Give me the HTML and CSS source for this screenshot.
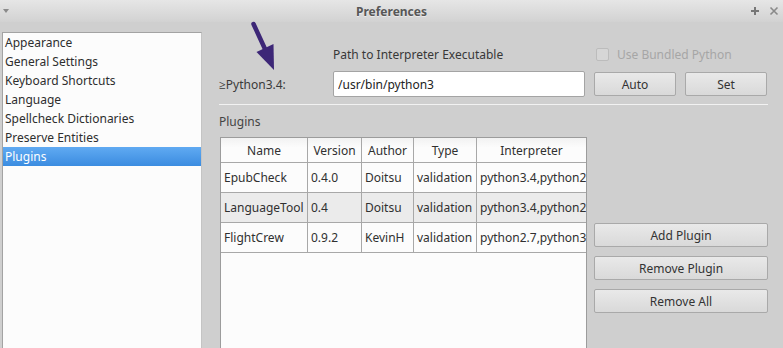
FILE: index.html
```html
<!DOCTYPE html>
<html lang="en">
<head>
  <meta charset="UTF-8">
  <title>Preferences</title>
  <link rel="stylesheet" href="styles.css">
</head>
<body>
  <div class="titlebar">
    <span class="menu-caret"></span>
    <span class="title">Preferences</span>
    <span class="title-buttons">
      <svg width="10" height="10" viewBox="0 0 10 10"><path d="M5 1v8M1 5h8" stroke="#777" stroke-width="2"/></svg>
      <svg width="10" height="10" viewBox="0 0 10 10"><path d="M1.5 1.5l7 7M8.5 1.5l-7 7" stroke="#8a8a8a" stroke-width="1.6"/></svg>
    </span>
  </div>

  <div class="window">
    <!-- Page list -->
    <ul class="pages">
      <li>Appearance</li>
      <li>General Settings</li>
      <li>Keyboard Shortcuts</li>
      <li>Language</li>
      <li>Spellcheck Dictionaries</li>
      <li>Preserve Entities</li>
      <li class="active">Plugins</li>
    </ul>

    <!-- Plugins page -->
    <div class="pane">
      <div class="interp">
        <span></span>
        <span class="path-label">Path to Interpreter Executable</span>
        <label class="bundled"><span class="check"></span>Use Bundled Python</label>

        <span class="py-label">&ge;Python3.4:</span>
        <input type="text" class="path-input" value="/usr/bin/python3">
        <button class="btn">Auto</button>
        <button class="btn">Set</button>
      </div>

      <div class="sep"></div>

      <div class="section-label">Plugins</div>

      <div class="plugins">
        <div class="table-box">
          <table>
            <thead>
              <tr>
                <th class="c-name">Name</th>
                <th class="c-ver">Version</th>
                <th class="c-author">Author</th>
                <th class="c-type">Type</th>
                <th class="c-interp">Interpreter</th>
              </tr>
            </thead>
            <tbody>
              <tr>
                <td>EpubCheck</td>
                <td>0.4.0</td>
                <td>Doitsu</td>
                <td>validation</td>
                <td>python3.4,python2</td>
              </tr>
              <tr class="alt">
                <td>LanguageTool</td>
                <td>0.4</td>
                <td>Doitsu</td>
                <td>validation</td>
                <td>python3.4,python2</td>
              </tr>
              <tr>
                <td>FlightCrew</td>
                <td>0.9.2</td>
                <td>KevinH</td>
                <td>validation</td>
                <td>python2.7,python3</td>
              </tr>
            </tbody>
          </table>
        </div>

        <div class="side-buttons">
          <button class="btn">Add Plugin</button>
          <button class="btn">Remove Plugin</button>
          <button class="btn">Remove All</button>
        </div>
      </div>
    </div>

    <!-- annotation arrow -->
    <svg class="arrow" width="783" height="348" viewBox="0 0 783 348">
      <path d="M253.5 24 L265 49" stroke="#3d2777" stroke-width="4.5" stroke-linecap="round"/>
      <polygon points="256.5,52 273.5,44 274,70" fill="#3d2777"/>
    </svg>
  </div>
</body>
</html>
```

FILE: styles.css
```css
* {
  box-sizing: border-box;
}

body {
  margin: 0;
  width: 783px;
  height: 348px;
  overflow: hidden;
  font-family: "Noto Sans", "Open Sans", sans-serif;
  font-size: 12px;
  color: #333;
  background: #cfcfcf;
  position: relative;
}

/* Title bar */
.titlebar {
  height: 22px;
  display: flex;
  align-items: center;
  justify-content: center;
  position: relative;
  background: linear-gradient(#e6e6e6, #d2d2d2);
}

.title {
  font-weight: bold;
  color: #575757;
  text-shadow: 0 1px 0 rgba(255, 255, 255, 0.5);
}

.menu-caret {
  position: absolute;
  left: 3px;
  top: 9px;
  border-left: 3.5px solid transparent;
  border-right: 3.5px solid transparent;
  border-top: 4px solid #8a8a8a;
}

.title-buttons {
  position: absolute;
  right: 4px;
  top: 6px;
  display: flex;
  gap: 9px;
}

/* Main window */
.window {
  display: flex;
  height: 326px;
  overflow: hidden;
}

.pages {
  list-style: none;
  margin: 10px 0 0 2px;
  padding: 0;
  width: 200px;
  height: 316px;
  background: #fcfcfc;
  border: 1px solid #a3a3a3;
  border-right-color: #c4c4c4;
  border-bottom: none;
}

.pages li {
  height: 19px;
  line-height: 19px;
  padding-left: 2px;
  color: #2e2e2e;
  white-space: nowrap;
}

.pages li.active {
  background: linear-gradient(#60aaf2, #3b8ce0);
  color: #fff;
}

.pane {
  padding: 0 15px 0 17px;
  width: 581px;
}

.interp {
  display: grid;
  grid-template-columns: 105px 252px 82px 82px;
  grid-template-rows: 20px 26px;
  column-gap: 9px;
  row-gap: 7px;
  margin-top: 22px;
  align-items: center;
}

.path-label {
  color: #383838;
}

.bundled {
  grid-column: 3 / 5;
  display: flex;
  align-items: center;
  color: #a6a6a6;
  padding-left: 2px;
  white-space: nowrap;
}

.check {
  width: 13px;
  height: 13px;
  border: 1px solid #bcbcbc;
  border-radius: 2px;
  background: #d6d6d6;
  margin-right: 8px;
}

.py-label {
  color: #3a3a3a;
}

.path-input {
  height: 26px;
  border: 1px solid #a4a4a4;
  border-radius: 2px;
  background: #fff;
  font: inherit;
  color: #222;
  padding: 0 4px;
}

.btn {
  height: 24px;
  border: 1px solid #a9a9a9;
  border-radius: 2px;
  background: linear-gradient(#e9e9e9, #d9d9d9);
  font: inherit;
  color: #333;
  padding: 0;
}

.sep {
  margin-top: 7px;
  height: 1px;
  background: #f2f2f2;
}

.section-label {
  height: 17px;
  line-height: 17px;
  margin: 8px 0 7px;
  color: #444;
}

/* Plugin table */
.plugins {
  display: flex;
}

.table-box {
  margin-left: 1px;
  width: 367px;
  height: 211px;
  flex-shrink: 0;
  background: #fcfcfc;
  border: 1px solid #9c9c9c;
  border-bottom: none;
}

table {
  border-collapse: separate;
  border-spacing: 0;
  table-layout: fixed;
  width: 365px;
}

th,
td {
  border-right: 1px solid #a8a8a8;
  border-bottom: 1px solid #a8a8a8;
  white-space: nowrap;
  overflow: hidden;
  padding: 0 0 0 3px;
  text-align: left;
  font-weight: normal;
  color: #303030;
}

th:last-child,
td:last-child {
  border-right: none;
}

th {
  height: 25px;
  text-align: center;
  padding: 0;
  background: linear-gradient(#f2f2f2, #fcfcfc 40%);
}

td {
  height: 30px;
}

.c-name { width: 87px; }
.c-ver { width: 54px; }
.c-author { width: 52px; }
.c-type { width: 63px; }
.c-interp { width: 109px; }

tr.alt td {
  background: #ebebeb;
}

.side-buttons {
  margin-left: 7px;
  padding-top: 86px;
  width: 174px;
  flex-shrink: 0;
  display: flex;
  flex-direction: column;
  gap: 9px;
}

/* annotation */
.arrow {
  position: absolute;
  left: 0;
  top: 0;
  pointer-events: none;
}
```
